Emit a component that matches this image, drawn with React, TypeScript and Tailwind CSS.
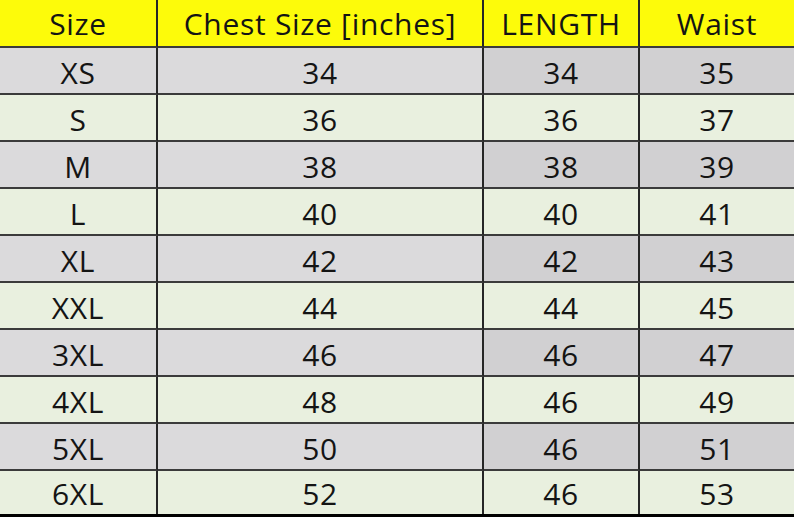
const rows: [string, number, number, number][] = [
  ["XS", 34, 34, 35],
  ["S", 36, 36, 37],
  ["M", 38, 38, 39],
  ["L", 40, 40, 41],
  ["XL", 42, 42, 43],
  ["XXL", 44, 44, 45],
  ["3XL", 46, 46, 47],
  ["4XL", 48, 46, 49],
  ["5XL", 50, 46, 51],
  ["6XL", 52, 46, 53],
];

const headers = ["Size", "Chest Size [inches]", "LENGTH", "Waist"];

export default function App() {
  return (
    <div
      className="w-[794px] h-[517px] overflow-hidden bg-black text-[#141414] text-[30px] tracking-[0.7px]"
      style={{ fontFamily: '"Open Sans", "Noto Sans", sans-serif' }}
    >
      <div className="grid grid-cols-[158px_326px_156px_154px] grid-rows-[48px_repeat(9,47px)_43px] border-b-[3px] border-black">
        {headers.map((h, i) => (
          <div
            key={h}
            className={`flex items-center justify-center pt-[1px] bg-[#fdfb0a] border-b-2 border-[#3b3b3b] ${
              i < 3 ? "border-r-2 border-r-[#262626]" : ""
            }`}
          >
            {h}
          </div>
        ))}
        {rows.map((r, ri) => {
          const gray = ri % 2 === 0;
          const last = ri === rows.length - 1;
          return r.map((v, ci) => (
            <div
              key={`${ri}-${ci}`}
              className={`flex items-center justify-center ${
                last ? "pt-[2px]" : "pt-[3px] border-b-2 border-[#3b3b3b]"
              } ${ci < 3 ? "border-r-2 border-r-[#262626]" : ""} ${
                gray
                  ? ci < 2
                    ? "bg-[#dbdadc]"
                    : "bg-[#d1d0d2]"
                  : "bg-[#e9f0df]"
              }`}
            >
              {v}
            </div>
          ));
        })}
      </div>
    </div>
  );
}
